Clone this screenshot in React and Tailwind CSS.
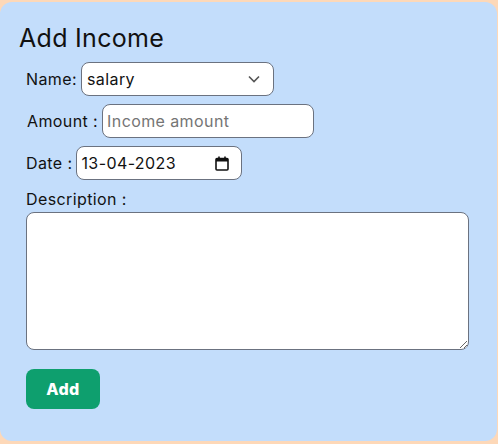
import { useState } from "react";

const font = { fontFamily: "Inter, 'Noto Sans', sans-serif" };

export default function App() {
  const [name, setName] = useState("salary");

  return (
    <div
      className="min-h-[444px] w-[498px] bg-[#fdd8b8] pt-[2px] pb-[3px]"
      style={font}
    >
      <div className="h-[439px] w-[497px] rounded-xl bg-[#c3ddfb] pt-[20px] pl-[19px] text-[#111]">
        <h2 className="text-[25px] leading-[32px] tracking-[0.3px]">
          Add Income
        </h2>

        <form className="flex flex-col pl-[7px] pt-[8px] text-[16px] tracking-[0.4px]">
          {/* Name */}
          <div className="flex h-[34px] items-center gap-[4px]">
            <label>Name:</label>
            <div className="relative">
              <select
                value={name}
                onChange={(e) => setName(e.target.value)}
                className="h-[34px] w-[193px] appearance-none rounded-lg border border-[#6b7280] bg-white pl-[5px] text-[16px] outline-none"
              >
                <option value="salary">salary</option>
                <option value="freelance">freelance</option>
                <option value="other">other</option>
              </select>
              <svg
                className="pointer-events-none absolute right-[14px] top-[13px]"
                width="12"
                height="8"
                viewBox="0 0 12 8"
                fill="none"
                stroke="#555"
                strokeWidth="1.6"
              >
                <path d="M1 1.5l5 5 5-5" />
              </svg>
            </div>
          </div>

          {/* Amount */}
          <div className="mt-[8px] flex h-[34px] items-center gap-[4px]">
            <label className="pl-[1px]">Amount :</label>
            <input
              type="text"
              placeholder="Income amount"
              className="h-[34px] w-[212px] rounded-lg border border-[#6b7280] bg-white px-[4px] text-[16px] outline-none placeholder:text-[#757575]"
            />
          </div>

          {/* Date */}
          <div className="mt-[8px] flex h-[34px] items-center gap-[4px]">
            <label>Date :</label>
            <div className="flex h-[34px] w-[166px] items-center justify-between rounded-lg border border-[#6b7280] bg-white pl-[4px] pr-[12px] text-[16px]">
              <span>13-04-2023</span>
              <svg width="14" height="15" viewBox="0 0 14 15" fill="none">
                <rect x="1" y="2.5" width="12" height="11.5" rx="1" stroke="#111" strokeWidth="1.6" />
                <rect x="1" y="2.5" width="12" height="3" fill="#111" />
                <path d="M4 0.5v3M10 0.5v3" stroke="#111" strokeWidth="1.6" />
              </svg>
            </div>
          </div>

          {/* Description */}
          <label className="mt-[8px] leading-[22px]">Description :</label>
          <textarea className="mt-[2px] h-[138px] w-[443px] rounded-lg border border-[#6b7280] bg-white p-1 outline-none" />

          <div>
            <button
              type="button"
              className="mt-[19px] h-[40px] w-[74px] rounded-lg bg-[#0e9f6e] text-[16px] font-extrabold text-white"
            >
              Add
            </button>
          </div>
        </form>
      </div>
    </div>
  );
}
